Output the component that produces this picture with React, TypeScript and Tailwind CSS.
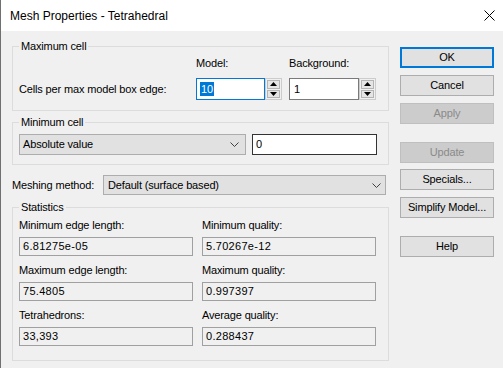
import React from "react";
import clsx from "clsx";

type BtnProps = { label: string; primary?: boolean; disabled?: boolean; className?: string };

const Btn = ({ label, primary, disabled, className }: BtnProps) => (
  <div
    className={clsx(
      "h-[21px] w-[94px] flex items-center justify-center",
      primary && "border-2 border-[#0078d7] bg-[#e1e1e1]",
      disabled && "border border-[#bfbfbf] bg-[#cccccc] text-[#8a8a8a]",
      !primary && !disabled && "border border-[#adadad] bg-[#e1e1e1]",
      className
    )}
  >
    {label}
  </div>
);

const Chevron = () => (
  <svg width="9" height="5" viewBox="0 0 9 5" className="shrink-0">
    <polyline points="0.5,0.5 4.5,4.5 8.5,0.5" fill="none" stroke="#404040" strokeWidth="1" />
  </svg>
);

const Arrow = ({ up }: { up?: boolean }) => (
  <svg width="7" height="4" viewBox="0 0 7 4">
    <polygon points={up ? "3.5,0 7,4 0,4" : "0,0 7,0 3.5,4"} fill="#000" />
  </svg>
);

const Spinner = () => (
  <div className="w-[17px] h-[22px] flex flex-col gap-[1px] p-[1px] bg-[#f0f0f0] border border-[#cccccc]">
    <div className="flex-1 flex items-center justify-center bg-[#e5e5e5] border border-[#b4b4b4]">
      <Arrow up />
    </div>
    <div className="flex-1 flex items-center justify-center bg-[#e5e5e5] border border-[#b4b4b4]">
      <Arrow />
    </div>
  </div>
);

const Stat = ({ label, value }: { label: string; value: string }) => (
  <div className="flex flex-col">
    <div className="leading-[13px] mt-[5px]">{label}</div>
    <div className="mt-[5px] h-[19px] border border-[#a0a0a0] bg-[#f0f0f0] pl-[3px] flex items-center tracking-[0.3px]">
      {value}
    </div>
  </div>
);

export default function App() {
  return (
    <div className="w-[503px] h-[368px] overflow-hidden bg-[#f0f0f0] border-l border-[#707070] text-[11px] tracking-[-0.15px] text-black font-['Liberation_Sans',Arial,sans-serif]">
      {/* Title bar */}
      <div className="h-[31px] bg-white flex items-center justify-between pl-[9px] pr-[8px]">
        <span className="text-[12px] tracking-normal">Mesh Properties - Tetrahedral</span>
        <svg width="11" height="11" viewBox="0 0 11 11">
          <path d="M0.5 0.5 L10.5 10.5 M10.5 0.5 L0.5 10.5" stroke="#000" strokeWidth="1" />
        </svg>
      </div>

      <div className="flex pl-[11px] gap-[11px]">
        {/* Left column */}
        <div className="w-[377px] flex flex-col">
          <fieldset className="mt-[9px] border border-[#dcdcdc] pb-[10px]">
            <legend className="ml-[6px] px-[2px] leading-[13px]">Maximum cell</legend>
            <div className="grid grid-cols-[170px_86px_87px] gap-x-[7px] pl-[6px] pt-[4px]">
              <div />
              <div className="leading-[13px]">Model:</div>
              <div className="leading-[13px]">Background:</div>
              <div className="mt-[8px] flex items-center h-[22px]">Cells per max model box edge:</div>
              <div className="mt-[8px] flex">
                <div className="flex-1 h-[22px] bg-white border border-[#0078d7] flex items-center pl-[3px]">
                  <span className="bg-[#0078d7] text-white px-[1px] leading-[14px]">10</span>
                </div>
                <Spinner />
              </div>
              <div className="mt-[8px] flex">
                <div className="flex-1 h-[22px] bg-white border border-[#7a7a7a] flex items-center pl-[4px]">1</div>
                <Spinner />
              </div>
            </div>
          </fieldset>

          <fieldset className="mt-[5px] border border-[#dcdcdc] pb-[9px]">
            <legend className="ml-[6px] px-[2px] leading-[13px]">Minimum cell</legend>
            <div className="flex gap-[6px] pl-[6px] pt-[5px]">
              <div className="w-[227px] h-[21px] bg-[#e1e1e1] border border-[#adadad] flex items-center justify-between pl-[3px] pr-[6px]">
                <span>Absolute value</span>
                <Chevron />
              </div>
              <div className="w-[125px] h-[21px] bg-white border border-[#333333] flex items-center pl-[3px]">0</div>
            </div>
          </fieldset>

          <div className="mt-[10px] flex items-center">
            <div className="w-[91px]">Meshing method:</div>
            <div className="w-[283px] h-[20px] bg-[#e1e1e1] border border-[#adadad] flex items-center justify-between pl-[4px] pr-[4px]">
              <span>Default (surface based)</span>
              <Chevron />
            </div>
          </div>

          <fieldset className="mt-[6px] border border-[#dcdcdc] pb-[14px]">
            <legend className="ml-[6px] px-[2px] leading-[13px]">Statistics</legend>
            <div className="grid grid-cols-[174px_174px] gap-x-[9px] pl-[6px] gap-y-[3px]">
              <Stat label="Minimum edge length:" value="6.81275e-05" />
              <Stat label="Minimum quality:" value="5.70267e-12" />
              <Stat label="Maximum edge length:" value="75.4805" />
              <Stat label="Maximum quality:" value="0.997397" />
              <Stat label="Tetrahedrons:" value="33,393" />
              <Stat label="Average quality:" value="0.288437" />
            </div>
          </fieldset>
        </div>

        {/* Right column: buttons */}
        <div className="flex flex-col pt-[16px]">
          <Btn label="OK" primary />
          <Btn label="Cancel" className="mt-[7px]" />
          <Btn label="Apply" disabled className="mt-[7px]" />
          <Btn label="Update" disabled className="mt-[18px]" />
          <Btn label="Specials..." className="mt-[6px]" />
          <Btn label="Simplify Model..." className="mt-[7px]" />
          <Btn label="Help" className="mt-[18px]" />
        </div>
      </div>
    </div>
  );
}
